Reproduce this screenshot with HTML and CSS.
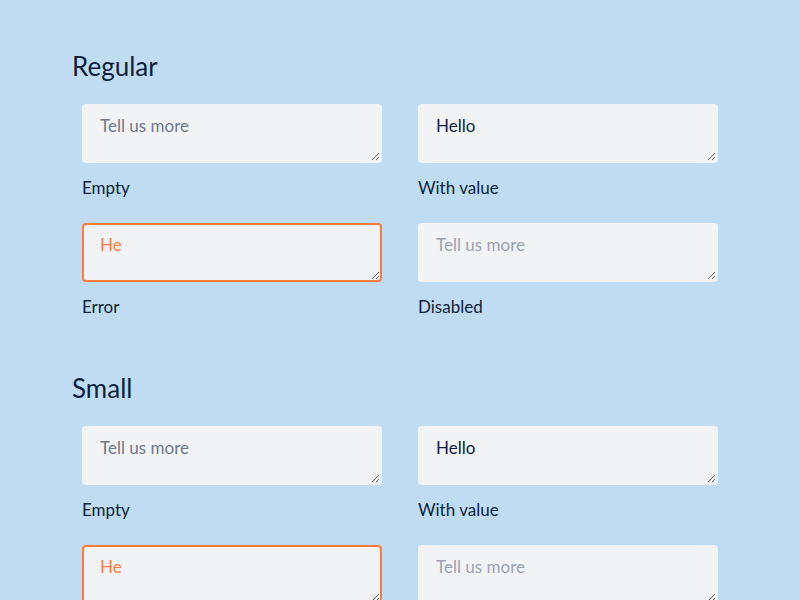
FILE: index.html
```html
<!DOCTYPE html>
<html lang="en">
<head>
<meta charset="utf-8">
<title>Textarea</title>
<link rel="stylesheet" href="styles.css">
</head>
<body>
<main class="page">
  <section class="section">
    <h2 class="section-title">Regular</h2>
    <div class="grid">
      <div class="field">
        <textarea class="ta" placeholder="Tell us more"></textarea>
        <div class="label">Empty</div>
      </div>
      <div class="field">
        <textarea class="ta">Hello</textarea>
        <div class="label">With value</div>
      </div>
      <div class="field">
        <textarea class="ta ta-error">He</textarea>
        <div class="label">Error</div>
      </div>
      <div class="field">
        <textarea class="ta" placeholder="Tell us more" disabled></textarea>
        <div class="label">Disabled</div>
      </div>
    </div>
  </section>
  <section class="section">
    <h2 class="section-title">Small</h2>
    <div class="grid">
      <div class="field">
        <textarea class="ta" placeholder="Tell us more"></textarea>
        <div class="label">Empty</div>
      </div>
      <div class="field">
        <textarea class="ta">Hello</textarea>
        <div class="label">With value</div>
      </div>
      <div class="field">
        <textarea class="ta ta-error">He</textarea>
        <div class="label">Error</div>
      </div>
      <div class="field">
        <textarea class="ta" placeholder="Tell us more" disabled></textarea>
        <div class="label">Disabled</div>
      </div>
    </div>
  </section>
</main>
</body>
</html>
```

FILE: styles.css
```css
html, body {
  margin: 0;
  padding: 0;
  background: #c0dcf2;
}
body {
  font-family: Lato, "Open Sans", sans-serif;
  color: #0d1f3c;
}
.page {
  padding: 50px 72px 0;
  display: flex;
  flex-direction: column;
  gap: 53px;
}
.section-title {
  margin: 0 0 22px;
  font-size: 26px;
  line-height: 32px;
  font-weight: 400;
  color: #0d1f3c;
}
.grid {
  display: grid;
  grid-template-columns: 300px 300px;
  column-gap: 36px;
  row-gap: 23px;
  padding-left: 10px;
}
.field {
  display: flex;
  flex-direction: column;
}
.ta {
  box-sizing: border-box;
  width: 300px;
  height: 59px;
  margin: 0;
  padding: 8px 16px;
  border: 2px solid #f2f3f5;
  border-radius: 4px;
  background: #f2f3f5;
  font-family: Lato, "Open Sans", sans-serif;
  font-size: 17px;
  line-height: 24px;
  color: #0d1f3c;
  outline: none;
  display: block;
}
.ta::placeholder {
  color: #6f7889;
  opacity: 1;
}
.ta:disabled {
  background: #f2f3f5;
}
.ta:disabled::placeholder {
  color: #9ba2b0;
}
.ta-error {
  border-color: #ff7a3d;
  color: #ff7a3d;
}
.label {
  margin-top: 13px;
  font-size: 17px;
  line-height: 24px;
  color: #0d1f3c;
}
```
